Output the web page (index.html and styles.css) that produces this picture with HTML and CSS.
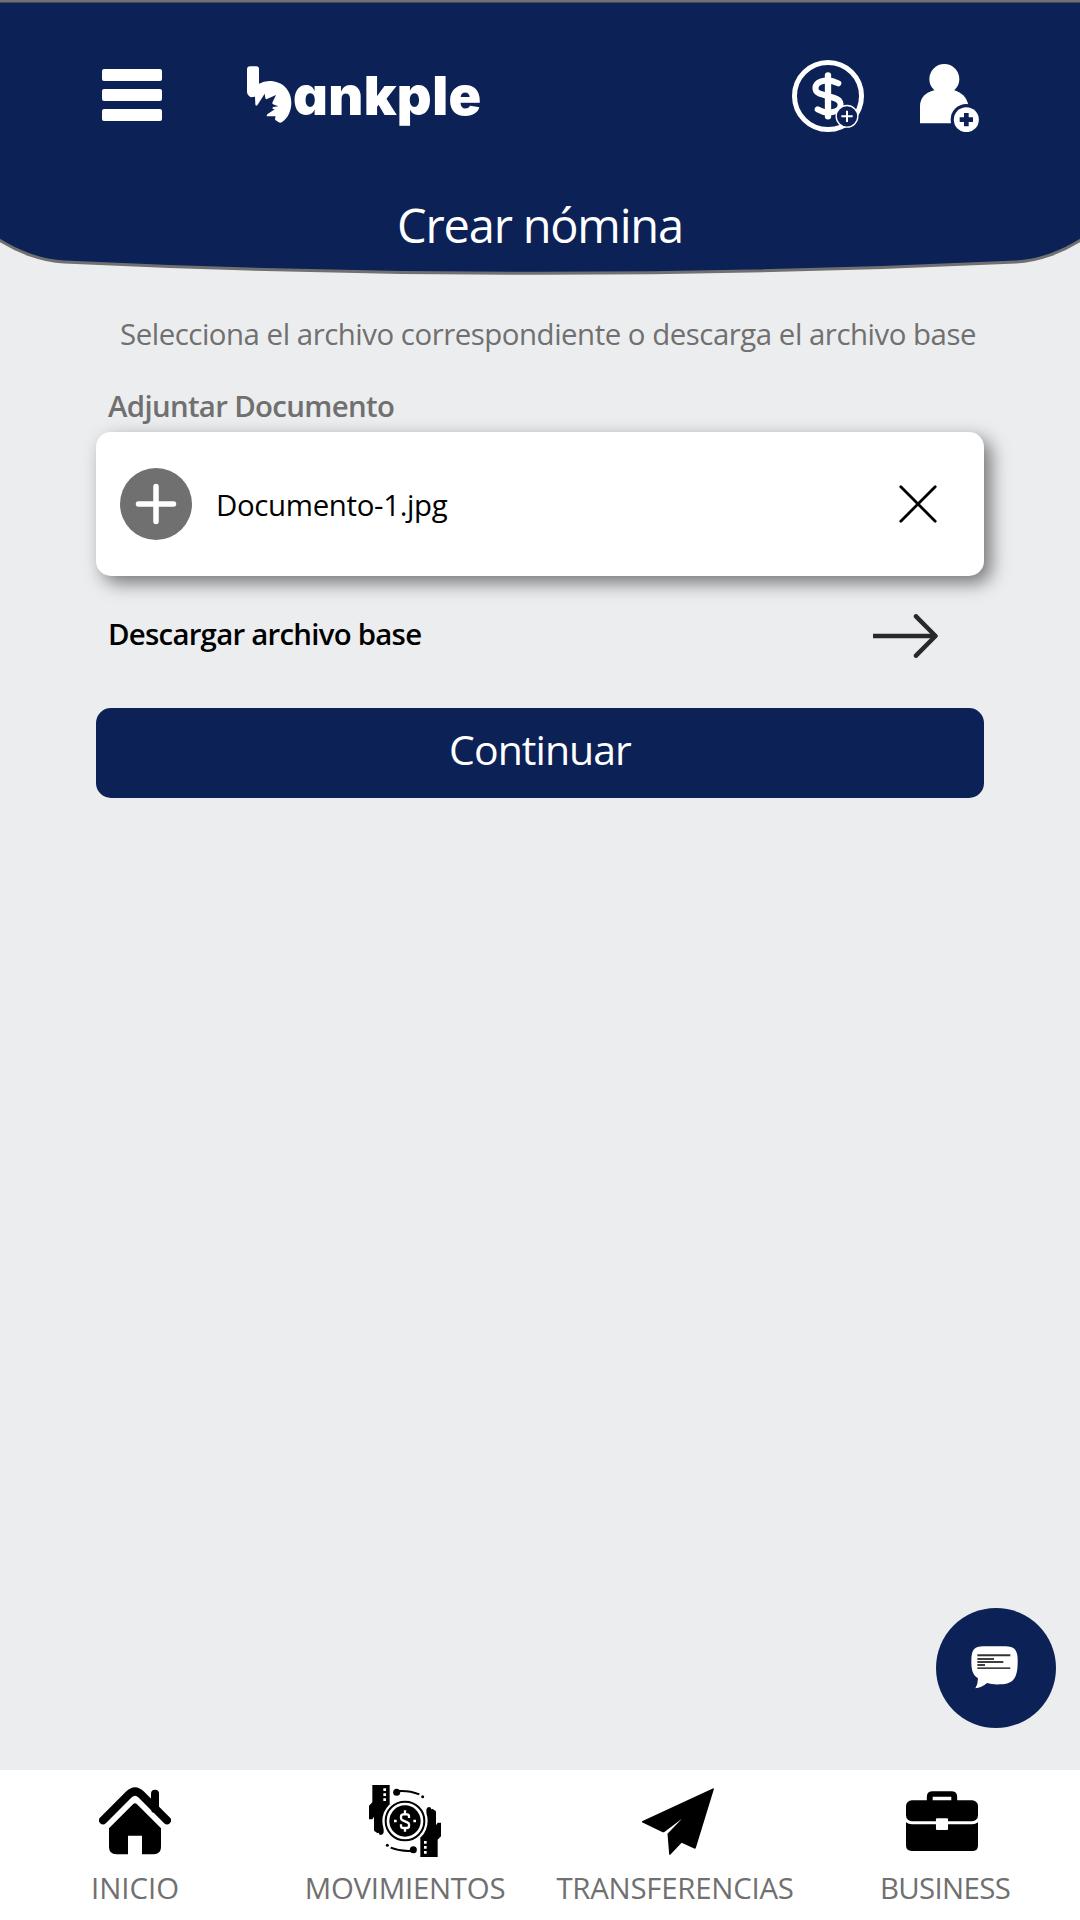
FILE: index.html
```html
<!DOCTYPE html>
<html lang="es">
<head>
<meta charset="utf-8">
<title>Bankple - Crear nómina</title>
<link rel="stylesheet" href="styles.css">
</head>
<body>
<div class="app">
  <header class="header">
    <svg class="header-shape" viewBox="0 0 1080 280" aria-hidden="true">
      <path d="M-4 1H1084V238C1063 252 1038 261 1016 262Q540 284.600 64 262C42 261 17 252 -4 238Z"/>
    </svg>
    <div class="topbar">
      <button class="icon-button" aria-label="Menú">
        <svg width="60" height="52" viewBox="0 0 60 52" fill="#fff">
          <rect width="60" height="12" rx="2"/><rect y="20" width="60" height="12" rx="2"/><rect y="40" width="60" height="12" rx="2"/>
        </svg>
      </button>
      <div class="logo">
        <svg class="logo-mark" width="45" height="57" viewBox="499 78 135 171" fill="#fff" aria-hidden="true">
          <path d="M508 79H527Q535 79 535 87V131Q549 123 566 123C606 123 632 151 632 188C632 213 621 235 603 247Q598 250 593 246L584 240Q582 236 585 229L560 229Q556 227 560 223L582 208L576 206Q574 203 578 201L593 199L577 193Q573 190 577 184L586 165L559 177Q555 179 554 174L552 161L531 194Q525 201 524 193L523 170L510 172Q499 164 499 155V88Q499 79 508 79Z"/>
        </svg>
        <span class="logo-text">ankple</span>
      </div>
      <div class="actions">
        <button class="icon-button" aria-label="Agregar dinero">
          <svg width="72" height="72" viewBox="66 60 216 216" fill="none" stroke="#fff">
            <circle cx="174" cy="168" r="100.500" stroke-width="15"/>
            <path d="M174 106V229" stroke-width="19" stroke-linecap="round"/>
            <path d="M205 130C188 121 168 119 152 125C132 133 131 154 149 161L193 174C217 181 217 205 199 213C182 220 160 218 143 208" stroke-width="18" stroke-linecap="round"/>
            <circle cx="231" cy="229" r="32.500" fill="#0c2156" stroke-width="4"/>
            <path d="M214 229H248M231 212V246" stroke-width="6"/>
          </svg>
        </button>
        <button class="icon-button" aria-label="Agregar usuario">
          <svg width="60" height="68" viewBox="450 71 180 204" fill="#fff">
            <circle cx="523" cy="116" r="45"/>
            <path d="M450 249V197C450 172 468 155 495 149H551C574 156 590 170 595 194L570 249Z"/>
            <circle cx="589" cy="238" r="47" fill="#0c2156"/>
            <circle cx="589" cy="238" r="37.500"/>
            <path d="M569 238H609M589 218V258" stroke="#0c2156" stroke-width="14"/>
          </svg>
        </button>
      </div>
    </div>
    <h1 class="title">Crear nómina</h1>
  </header>

  <main class="content">
    <p class="intro">Selecciona el archivo correspondiente o descarga el archivo base</p>
    <h2 class="label">Adjuntar Documento</h2>
    <section class="file-card">
      <svg width="72" height="72" viewBox="0 0 72 72" aria-hidden="true">
        <circle cx="36" cy="36" r="36" fill="#707070"/>
        <path d="M18.500 36H53.500M36 18.500V53.500" stroke="#fff" stroke-width="5.500" stroke-linecap="round"/>
      </svg>
      <span class="file-name">Documento-1.jpg</span>
      <button class="icon-button" aria-label="Quitar archivo">
        <svg width="38" height="38" viewBox="0 0 38 38"><path d="M1.800 1.800L36.200 36.200M36.200 1.800L1.800 36.200" stroke="#000" stroke-width="2.800" stroke-linecap="round"/></svg>
      </button>
    </section>
    <a class="download">
      <span class="download-text">Descargar archivo base</span>
      <svg class="download-arrow" width="66" height="44" viewBox="0 0 66 44" fill="none" stroke="#292929" stroke-width="4.500">
        <path d="M0 22H62"/><path d="M43 2.300L62.500 22L43 41.700" stroke-linecap="round" stroke-linejoin="round"/>
      </svg>
    </a>
    <button class="primary">Continuar</button>
  </main>

  <button class="chat" aria-label="Chat">
    <svg width="47" height="43" viewBox="153 167 141 129">
      <path d="M190 168H256C282 168 292 178 293 206C294 260 284 281 240 282Q215 283 201 278Q184 293 166 294Q174 281 174 264C158 254 154 238 154 214C154 178 162 169 190 168Z" fill="#fff"/>
      <path d="M172 195H271" stroke="#333" stroke-width="6"/>
      <path d="M172 206H222M172 215H250M172 224H195M172 233.500H271" stroke="#000" stroke-width="4"/>
    </svg>
  </button>

  <nav class="tabs">
    <a class="tab tab-home">
      <span class="tab-icon"><svg width="72" height="68" viewBox="117 82 216 204">
        <path d="M129 182L206 105Q225 86 244 105L321 182M285 102V148" fill="none" stroke="#000" stroke-width="24" stroke-linecap="round"/>
        <path d="M219 134Q225 128 231 134L303 206V262Q303 284 281 284H246V228H204V284H169Q147 284 147 262V206Z"/>
      </svg></span>
      <span class="tab-label">INICIO</span>
    </a>
    <a class="tab tab-moves">
      <span class="tab-icon"><svg width="72" height="72" viewBox="237 75 216 216">
        <g id="hand">
          <path d="M247 75H299V132L305 145L281 180V217Q280 225 273 225Q267 225 266 218Q260 221 258 215Q252 216 252 209V170L247 178H237V137L247 127Z"/>
          <path d="M280 85h8v8h-8zM280 100h8v8h-8zM280 115h8v8h-8z" fill="#fff"/>
          <circle cx="320" cy="97" r="10.500"/>
          <path d="M320 93.500Q356 90 388 103" fill="none" stroke="#000" stroke-width="6"/>
          <circle cx="398" cy="110" r="4.500"/>
        </g>
        <use href="#hand" transform="rotate(180 345 183)"/>
        <circle cx="345" cy="183" r="68" fill="#fff"/>
        <circle cx="345" cy="183" r="58" fill="none" stroke="#000" stroke-width="6"/>
        <circle cx="345" cy="183" r="47"/>
        <path d="M357 174V169Q357 163 351 163H340Q333 163 333 170V175Q333 179 338 181L352 187Q357 189 357 193V198Q357 204 351 204H340Q333 204 333 197V193M345 151V163M345 204V215" fill="none" stroke="#fff" stroke-width="7"/>
        <path d="M312 179h8v8h-8zM370 179h8v8h-8z" fill="#fff"/>
      </svg></span>
      <span class="tab-label">MOVIMIENTOS</span>
    </a>
    <a class="tab tab-transfers">
      <span class="tab-icon"><svg class="plane" width="72" height="67" viewBox="296 82 209 201" preserveAspectRatio="none">
        <path d="M296 182L503 83L505 84L452 263L449 264L411 246L378 282L375 282L370 219L412 174L360 215H356L296 185Z"/>
      </svg></span>
      <span class="tab-label">TRANSFERENCIAS</span>
    </a>
    <a class="tab tab-business">
      <span class="tab-icon"><svg class="case" width="72" height="60" viewBox="1063 92 209 181" preserveAspectRatio="none">
        <path d="M1132 122V109Q1132 101 1141 101H1194Q1203 101 1203 109V122" fill="none" stroke="#000" stroke-width="17"/>
        <rect x="1063" y="120" width="209" height="63" rx="17"/>
        <path d="M1063 186Q1070 192 1080 192H1255Q1265 192 1272 186V256Q1272 273 1255 273H1080Q1063 273 1063 256Z"/>
        <rect x="1150" y="174" width="35" height="36" rx="3" fill="#fff"/>
      </svg></span>
      <span class="tab-label">BUSINESS</span>
    </a>
  </nav>
</div>
</body>
</html>
```
FILE: styles.css
```css
* {
  box-sizing: border-box;
  margin: 0;
}

body {
  font-family: "Open Sans", "Noto Sans", sans-serif;
  font-size: 29.4px;
  line-height: 40px;
  color: #000;
  background: #ecedef;
}

svg {
  display: block;
}

button {
  border: 0;
  padding: 0;
  background: none;
  font: inherit;
  color: inherit;
}

.app {
  position: relative;
  display: flex;
  flex-direction: column;
  width: 1080px;
  height: 1920px;
  overflow: hidden;
}

.header {
  position: relative;
  height: 280px;
  padding-top: 60px;
}

.header-shape {
  position: absolute;
  inset: 0;
  width: 1080px;
  height: 280px;
  fill: #0c2156;
  stroke: #707070;
  stroke-width: 3;
}

.topbar {
  position: relative;
  display: flex;
  align-items: flex-start;
  height: 135px;
  padding: 0 100px 0 102px;
}

.topbar > .icon-button {
  padding-top: 9px;
}

.logo {
  display: flex;
  align-items: flex-start;
  margin-left: 85px;
  padding-top: 6px;
}

.logo-text {
  font: 900 54px/60px Inter, sans-serif;
  font-feature-settings: "cv11";
  letter-spacing: 0.4px;
  color: #fff;
  margin: 0 0 0 1px;
}

.actions {
  display: flex;
  gap: 56px;
  margin-left: auto;
}

.actions .icon-button:last-child {
  padding-top: 4px;
}

.title {
  position: relative;
  font-size: 47px;
  font-weight: 400;
  line-height: 60px;
  letter-spacing: -1.2px;
  text-align: center;
  color: #fff;
}

.content {
  flex: 1;
  padding: 34px 96px 0;
}

.intro {
  padding-left: 24px;
  letter-spacing: -0.47px;
  white-space: nowrap;
  color: #707070;
}

.label {
  margin-top: 32px;
  padding-left: 12px;
  font-size: inherit;
  font-weight: 600;
  letter-spacing: -0.67px;
  color: #707070;
}

.file-card {
  display: flex;
  align-items: center;
  height: 144px;
  margin-top: 6px;
  padding: 0 47px 0 24px;
  border-radius: 15px;
  background: #fff;
  box-shadow: 7px 7px 18px rgba(0, 0, 0, 0.5);
}

.file-name {
  flex: 1;
  margin-left: 24px;
  padding-top: 2px;
  letter-spacing: -0.33px;
}

.download {
  display: flex;
  align-items: center;
  justify-content: space-between;
  height: 44px;
  margin-top: 38px;
  padding: 0 45px 0 12px;
}

.download-text {
  font-weight: 600;
  letter-spacing: -0.75px;
  padding-bottom: 4px;
}

.primary {
  display: block;
  width: 100%;
  height: 90px;
  margin-top: 50px;
  padding-bottom: 8px;
  border-radius: 15px;
  background: #0c2156;
  color: #fff;
  font-size: 41px;
  letter-spacing: -0.95px;
}

.chat {
  position: absolute;
  right: 24px;
  bottom: 192px;
  display: grid;
  place-items: center;
  width: 120px;
  height: 120px;
  padding: 0 4px 2px 0;
  border-radius: 50%;
  background: #0c2156;
}

.tabs {
  display: grid;
  grid-template-columns: repeat(4, 1fr);
  height: 150px;
  padding-top: 15px;
  background: #fff;
}

.tab {
  display: flex;
  flex-direction: column;
  align-items: center;
  gap: 11px;
  color: #707070;
}

.tab-icon {
  display: grid;
  place-items: center;
  width: 72px;
  height: 72px;
  color: #000;
}

.plane {
  margin-left: 3px;
}

.case {
  margin-left: -6px;
}

.tab-label {
  letter-spacing: -0.25px;
}

.tab-home .tab-label {
  letter-spacing: 0;
}

.tab-business .tab-label {
  letter-spacing: -0.65px;
}
```
